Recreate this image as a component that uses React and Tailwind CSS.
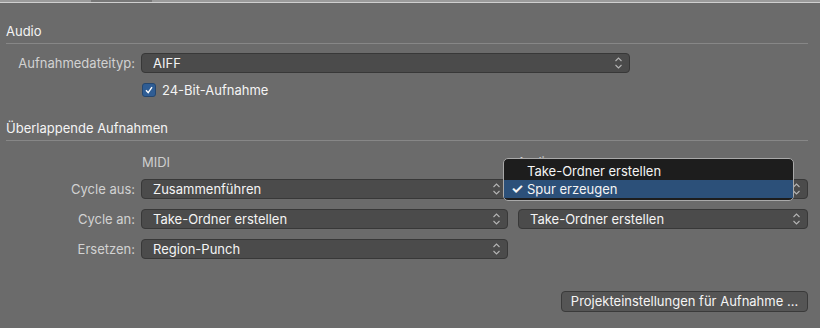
import React from "react";

const Chevrons = () => (
  <svg width="9" height="14" viewBox="0 0 9 14" className="shrink-0">
    <path d="M1.5 5 L4.5 2 L7.5 5" fill="none" stroke="#b4b4b4" strokeWidth="1.1" />
    <path d="M1.5 9 L4.5 12 L7.5 9" fill="none" stroke="#b4b4b4" strokeWidth="1.1" />
  </svg>
);

const Select = ({ value, className = "" }) => (
  <div
    className={`h-[20px] flex items-center justify-between pl-[11px] pr-[6px] rounded-[4px] bg-[#4b4b4b] border border-[#383838] text-[13px] text-[#f4f4f4] ${className}`}
  >
    <span className="leading-none">{value}</span>
    <Chevrons />
  </div>
);

const Label = ({ children }) => (
  <div className="w-[135px] shrink-0 text-right text-[13px] text-[#d2d2d2] leading-none">{children}</div>
);

export default function App() {
  return (
    <div
      className="relative w-[820px] h-[328px] bg-[#6b6b6b] overflow-hidden"
      style={{ fontFamily: 'Inter, "Liberation Sans", Arial, sans-serif' }}
    >
      <div className="h-[2px] flex bg-[#9a9a9a]">
        <div className="ml-[91px] w-[61px] bg-[#777777]" />
      </div>
      <div className="h-px bg-[#cfcfcf]" />

      <div className="mt-[21px] pl-[6px] h-[16px] flex items-center text-[13px] text-[#f4f4f4]">Audio</div>
      <div className="mt-[3px] ml-[6px] w-[802px] h-px bg-[#878787]" />

      <div className="mt-[9px] flex items-center gap-[6px]">
        <Label>Aufnahmedateityp:</Label>
        <Select value="AIFF" className="w-[489px]" />
      </div>

      <div className="mt-[10px] ml-[142px] flex items-center gap-[6px]">
        <div className="w-[14px] h-[14px] rounded-[3px] bg-[#2f5d94] border border-[#24466f] flex items-center justify-center">
          <svg width="10" height="10" viewBox="0 0 10 10">
            <path d="M2 5.2 L4.2 7.6 L8 2.2" fill="none" stroke="#ffffff" strokeWidth="1.4" />
          </svg>
        </div>
        <span className="text-[13px] text-[#f4f4f4] leading-none">24-Bit-Aufnahme</span>
      </div>

      <div className="mt-[24px] pl-[6px] h-[16px] flex items-center text-[13px] text-[#f4f4f4]">Überlappende Aufnahmen</div>
      <div className="mt-[3px] ml-[6px] w-[802px] h-px bg-[#878787]" />

      <div className="mt-[14px] h-[16px] flex items-center text-[13px] text-[#cfcfcf]">
        <div className="ml-[142px] w-[375px]">MIDI</div>
        <div>Audio</div>
      </div>

      <div className="mt-[8px] flex flex-col gap-[10px]">
        <div className="flex items-center gap-[6px]">
          <Label>Cycle aus:</Label>
          <Select value="Zusammenführen" className="w-[367px]" />
          <Select value="Spur erzeugen" className="ml-[4px] w-[290px]" />
        </div>
        <div className="flex items-center gap-[6px]">
          <Label>Cycle an:</Label>
          <Select value="Take-Ordner erstellen" className="w-[367px]" />
          <Select value="Take-Ordner erstellen" className="ml-[4px] w-[290px]" />
        </div>
        <div className="flex items-center gap-[6px]">
          <Label>Ersetzen:</Label>
          <Select value="Region-Punch" className="w-[367px]" />
        </div>
      </div>

      <div className="mt-[32px] flex justify-end pr-[12px]">
        <div className="w-[247px] h-[21px] rounded-[4px] bg-[#555555] border border-[#3a3a3a] flex items-center justify-center text-[13px] text-[#f4f4f4] leading-none">
          Projekteinstellungen für Aufnahme ...
        </div>
      </div>

      <div className="absolute left-[503px] top-[158px] w-[291px] h-[43px] rounded-[5px] bg-[#1d1d1d] border border-[#a9a9a9] pt-[3px] text-[13px] text-[#f4f4f4]">
        <div className="h-[18px] flex items-center pl-[23px] leading-none">Take-Ordner erstellen</div>
        <div className="h-[18px] flex items-center bg-[#2c5079] leading-none">
          <span className="w-[23px] pl-[7px] text-[14px] font-bold">✓</span>
          <span>Spur erzeugen</span>
        </div>
      </div>
    </div>
  );
}
